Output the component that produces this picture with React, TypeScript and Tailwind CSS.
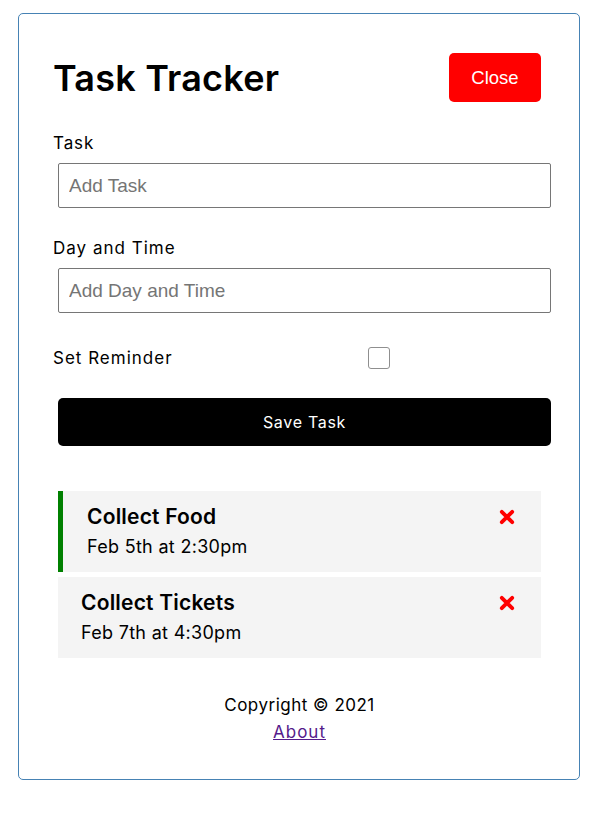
const tasks = [
  { id: 1, text: 'Collect Food', day: 'Feb 5th at 2:30pm', reminder: true },
  { id: 2, text: 'Collect Tickets', day: 'Feb 7th at 4:30pm', reminder: false },
];

function CloseIcon() {
  return (
    <svg viewBox="0 0 16 16" className="mt-[6px] h-[16px] w-[16px] shrink-0" aria-hidden="true">
      <path d="M2.8 2.8 L13.2 13.2 M13.2 2.8 L2.8 13.2" stroke="#ff0000" strokeWidth="3.8" strokeLinecap="round" />
    </svg>
  );
}

export default function App() {
  return (
    <div className="min-h-[815px] bg-white pt-[13px] pl-[18px] font-['Inter',sans-serif] text-black">
      <div className="w-[562px] rounded-[5px] border border-[#4682b4] pt-[34px] pb-[33px] pl-[34px] pr-[33px]">
        {/* Header */}
        <header className="flex h-[59px] items-center justify-between">
          <h1 className="text-[36px] font-semibold leading-none tracking-[0.2px]">Task Tracker</h1>
          <button className="m-[5px] h-[49px] w-[92px] rounded-[5px] bg-[#ff0000] pt-[1px] font-['Liberation_Sans',sans-serif] text-[18.5px] text-white">
            Close
          </button>
        </header>

        {/* Add task form */}
        <form className="mt-[24px]">
          <label className="block h-[24px] text-[17px] leading-[24px] tracking-[0.9px]">Task</label>
          <input
            type="text"
            placeholder="Add Task"
            className="mt-[8px] ml-[5px] block h-[45px] w-[493px] rounded-[2px] border border-[#767676] pl-[10px] font-['Liberation_Sans',sans-serif] text-[19px] placeholder:text-[#757575]"
          />

          <label className="mt-[28px] block h-[24px] text-[17px] leading-[24px] tracking-[1px]">Day and Time</label>
          <input
            type="text"
            placeholder="Add Day and Time"
            className="mt-[8px] ml-[5px] block h-[45px] w-[493px] rounded-[2px] border border-[#767676] pl-[10px] font-['Liberation_Sans',sans-serif] text-[19px] placeholder:text-[#757575]"
          />

          <div className="mt-[34px] flex h-[22px] items-center">
            <label className="w-[315px] text-[17px] leading-[22px] tracking-[1px]">Set Reminder</label>
            <div className="h-[22px] w-[22px] rounded-[3px] border border-[#8f8f8f] bg-white" />
          </div>

          <button
            type="button"
            className="mt-[29px] ml-[5px] block h-[48px] w-[493px] rounded-[5px] bg-black text-[16px] tracking-[0.7px] text-white"
          >
            Save Task
          </button>
        </form>

        {/* Task list */}
        <div className="mt-[45px] flex flex-col gap-[5px] px-[5px]">
          {tasks.map((t) => (
            <div
              key={t.id}
              className={`flex h-[81px] items-start justify-between bg-[#f4f4f4] pt-[12px] pr-[26px] ${
                t.reminder ? 'border-l-[5px] border-[#008000] pl-[24px]' : 'pl-[23px]'
              }`}
            >
              <div>
                <h3 className="text-[21px] font-semibold leading-[28px] tracking-[0.2px]">{t.text}</h3>
                <p className="mt-[4px] text-[18px] leading-[24px] tracking-[0.3px]">{t.day}</p>
              </div>
              <CloseIcon />
            </div>
          ))}
        </div>

        {/* Footer */}
        <footer className="mt-[34px] text-center text-[17px] leading-[27px] tracking-[0.5px]">
          <p>Copyright © 2021</p>
          <a href="#" className="tracking-[1px] text-[#551a8b] underline">
            About
          </a>
        </footer>
      </div>
    </div>
  );
}
